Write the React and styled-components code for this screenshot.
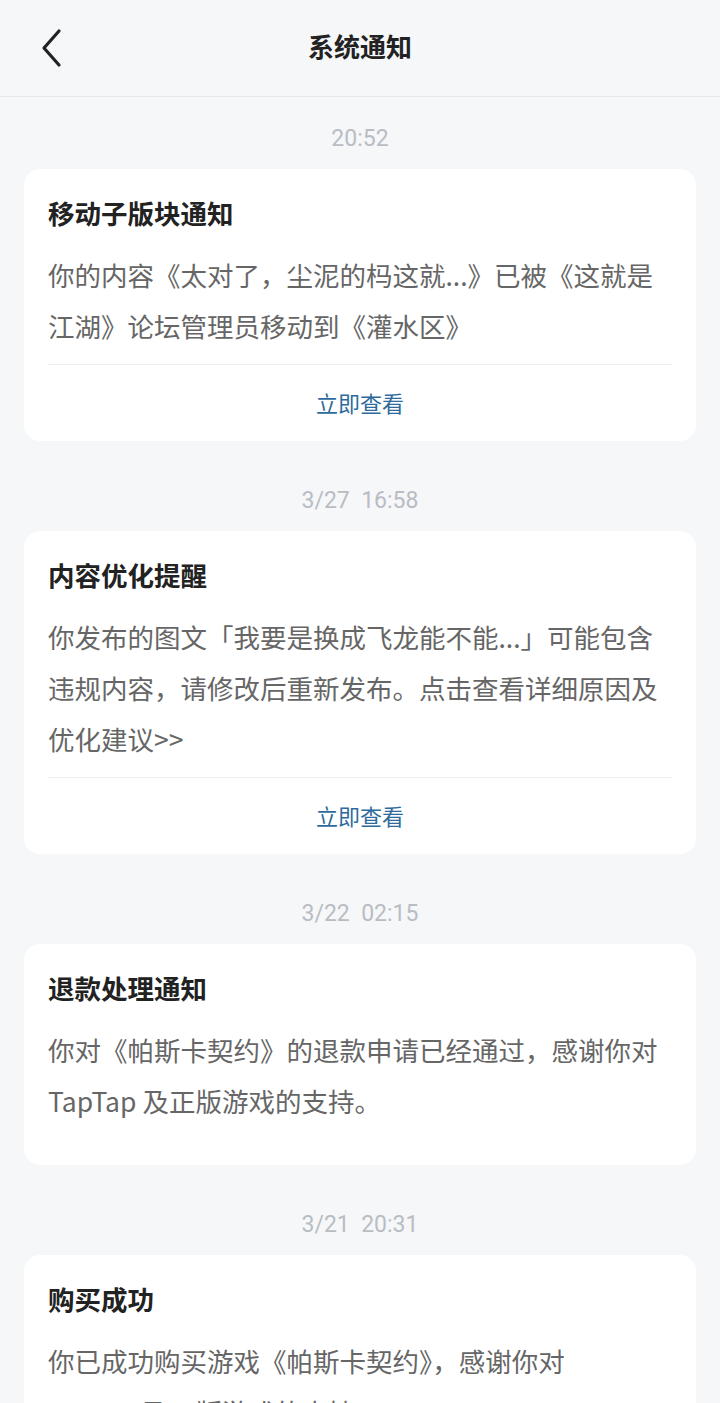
import React from "react";
import styled, { createGlobalStyle } from "styled-components";

const GlobalStyle = createGlobalStyle`
  html, body {
    margin: 0;
    padding: 0;
    background: #f5f7f9;
  }
  body {
    font-family: "Noto Sans CJK SC", "Noto Sans", Roboto, sans-serif;
  }
`;

const Page = styled.div`
  width: 720px;
  height: 1403px;
  background: #f5f7f9;
  overflow: hidden;
`;

const Header = styled.div`
  height: 97px;
  box-sizing: border-box;
  padding-bottom: 4px;
  display: flex;
  align-items: center;
  justify-content: center;
  position: relative;
  border-bottom: 1px solid #e6e8eb;
`;

const BackButton = styled.button`
  position: absolute;
  left: 36px;
  top: 24px;
  width: 32px;
  height: 48px;
  padding: 0;
  border: 0;
  background: none;
  display: flex;
  align-items: center;
  justify-content: center;
`;

const Title = styled.h1`
  margin: 0;
  font-size: 26px;
  font-weight: 700;
  color: #222;
  line-height: 36px;
`;

const List = styled.div`
  display: flex;
  flex-direction: column;
  gap: 18px;
  padding: 0 24px;
`;

const Group = styled.div`
  display: flex;
  flex-direction: column;
`;

const Time = styled.div`
  margin: 30px 0 18px;
  height: 24px;
  line-height: 24px;
  text-align: center;
  font-family: Roboto, "Noto Sans", sans-serif;
  font-size: 23px;
  color: #b9bdc3;
  white-space: pre;
`;

const Card = styled.div`
  background: #fff;
  border-radius: 16px;
  padding: 26px 24px ${(p) => (p.$hasAction ? "0" : "39px")};
`;

const CardTitle = styled.div`
  font-size: 26.5px;
  line-height: 36px;
  font-weight: 700;
  color: #222;
`;

const CardBody = styled.div`
  margin-top: 18px;
  font-size: 26.5px;
  line-height: 51px;
  color: #666;
  white-space: pre-line;
`;

const Action = styled.div`
  margin-top: 13px;
  border-top: 1px solid #eeeff1;
  height: 77px;
  box-sizing: border-box;
  padding-bottom: 3px;
  display: flex;
  align-items: center;
  justify-content: center;
  font-size: 22px;
  color: #2e6b9c;
`;

const Chevron = () => (
  <svg width="24" height="40" viewBox="0 0 24 40" fill="none">
    <path
      d="M19 3 L4 20 L19 37"
      stroke="#222"
      strokeWidth="3.2"
      strokeLinecap="round"
      strokeLinejoin="round"
    />
  </svg>
);

const notices = [
  {
    time: "20:52",
    title: "移动子版块通知",
    body: "你的内容《太对了，尘泥的杩这就...》已被《这就是\n江湖》论坛管理员移动到《灌水区》",
    action: "立即查看",
  },
  {
    time: "3/27  16:58",
    title: "内容优化提醒",
    body: "你发布的图文「我要是换成飞龙能不能...」可能包含\n违规内容，请修改后重新发布。点击查看详细原因及\n优化建议>>",
    action: "立即查看",
  },
  {
    time: "3/22  02:15",
    title: "退款处理通知",
    body: "你对《帕斯卡契约》的退款申请已经通过，感谢你对\nTapTap 及正版游戏的支持。",
  },
  {
    time: "3/21  20:31",
    title: "购买成功",
    body: "你已成功购买游戏《帕斯卡契约》，感谢你对\nTapTap 及正版游戏的支持。",
  },
];

export default function App() {
  return (
    <Page>
      <GlobalStyle />
      <Header>
        <BackButton aria-label="back">
          <Chevron />
        </BackButton>
        <Title>系统通知</Title>
      </Header>
      <List>
        {notices.map((n, i) => (
          <Group key={i}>
            <Time>{n.time}</Time>
            <Card $hasAction={!!n.action}>
              <CardTitle>{n.title}</CardTitle>
              <CardBody>{n.body}</CardBody>
              {n.action && <Action>{n.action}</Action>}
            </Card>
          </Group>
        ))}
      </List>
    </Page>
  );
}
